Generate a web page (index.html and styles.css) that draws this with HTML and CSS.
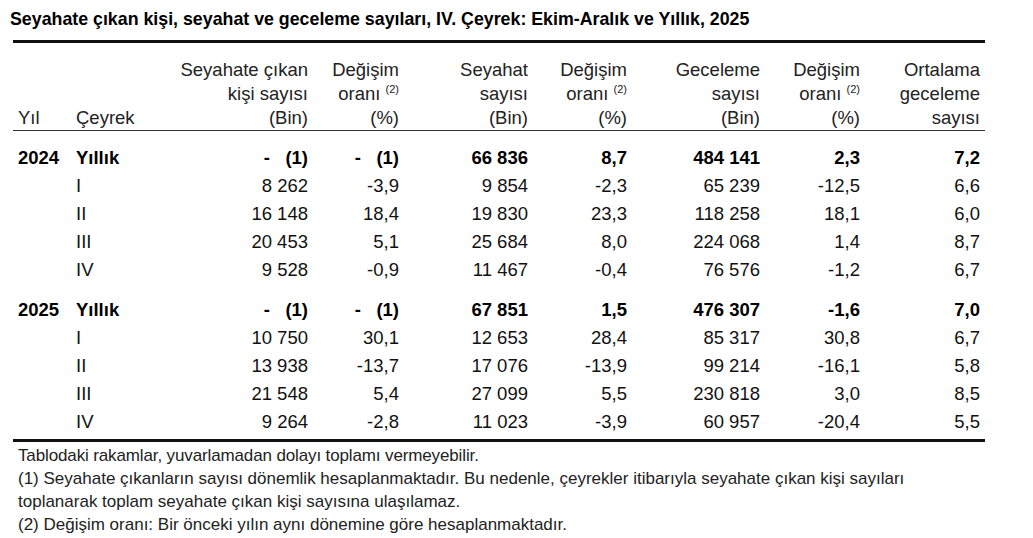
FILE: index.html
```html
<!DOCTYPE html>
<html lang="tr">
<head>
<meta charset="utf-8">
<title>Seyahate çıkan kişi</title>
<link rel="stylesheet" href="styles.css">
</head>
<body>
<div class="page">
  <h1 class="title">Seyahate çıkan kişi, seyahat ve geceleme sayıları, IV. Çeyrek: Ekim-Aralık ve Yıllık, 2025</h1>
  <table class="data">
    <colgroup>
      <col class="c-yil"><col class="c-ceyrek"><col class="c-n1"><col class="c-p1"><col class="c-n2"><col class="c-p2"><col class="c-n3"><col class="c-p3"><col class="c-avg">
    </colgroup>
    <thead>
      <tr>
        <th class="l">Yıl</th>
        <th class="l">Çeyrek</th>
        <th>Seyahate çıkan<br>kişi sayısı<br>(Bin)</th>
        <th>Değişim<br>oranı <sup>(2)</sup><br>(%)</th>
        <th>Seyahat<br>sayısı<br>(Bin)</th>
        <th>Değişim<br>oranı <sup>(2)</sup><br>(%)</th>
        <th>Geceleme<br>sayısı<br>(Bin)</th>
        <th>Değişim<br>oranı <sup>(2)</sup><br>(%)</th>
        <th class="last">Ortalama<br>geceleme<br>sayısı</th>
      </tr>
    </thead>
    <tbody>
      <tr class="b first">
        <td class="l">2024</td><td class="l">Yıllık</td><td>-&nbsp;&nbsp;&nbsp;(1)</td><td>-&nbsp;&nbsp;&nbsp;(1)</td><td>66 836</td><td>8,7</td><td>484 141</td><td>2,3</td><td class="last">7,2</td>
      </tr>
      <tr><td class="l"></td><td class="l">I</td><td>8 262</td><td>-3,9</td><td>9 854</td><td>-2,3</td><td>65 239</td><td>-12,5</td><td class="last">6,6</td></tr>
      <tr><td class="l"></td><td class="l">II</td><td>16 148</td><td>18,4</td><td>19 830</td><td>23,3</td><td>118 258</td><td>18,1</td><td class="last">6,0</td></tr>
      <tr><td class="l"></td><td class="l">III</td><td>20 453</td><td>5,1</td><td>25 684</td><td>8,0</td><td>224 068</td><td>1,4</td><td class="last">8,7</td></tr>
      <tr><td class="l"></td><td class="l">IV</td><td>9 528</td><td>-0,9</td><td>11 467</td><td>-0,4</td><td>76 576</td><td>-1,2</td><td class="last">6,7</td></tr>
      <tr class="b gap">
        <td class="l">2025</td><td class="l">Yıllık</td><td>-&nbsp;&nbsp;&nbsp;(1)</td><td>-&nbsp;&nbsp;&nbsp;(1)</td><td>67 851</td><td>1,5</td><td>476 307</td><td>-1,6</td><td class="last">7,0</td>
      </tr>
      <tr><td class="l"></td><td class="l">I</td><td>10 750</td><td>30,1</td><td>12 653</td><td>28,4</td><td>85 317</td><td>30,8</td><td class="last">6,7</td></tr>
      <tr><td class="l"></td><td class="l">II</td><td>13 938</td><td>-13,7</td><td>17 076</td><td>-13,9</td><td>99 214</td><td>-16,1</td><td class="last">5,8</td></tr>
      <tr><td class="l"></td><td class="l">III</td><td>21 548</td><td>5,4</td><td>27 099</td><td>5,5</td><td>230 818</td><td>3,0</td><td class="last">8,5</td></tr>
      <tr class="end"><td class="l"></td><td class="l">IV</td><td>9 264</td><td>-2,8</td><td>11 023</td><td>-3,9</td><td>60 957</td><td>-20,4</td><td class="last">5,5</td></tr>
    </tbody>
  </table>
  <div class="notes">
    <p class="tight">Tablodaki rakamlar, yuvarlamadan dolayı toplamı vermeyebilir.</p>
    <p>(1) Seyahate çıkanların sayısı dönemlik hesaplanmaktadır. Bu nedenle, çeyrekler itibarıyla seyahate çıkan kişi sayıları<br>toplanarak toplam seyahate çıkan kişi sayısına ulaşılamaz.</p>
    <p>(2) Değişim oranı: Bir önceki yılın aynı dönemine göre hesaplanmaktadır.</p>
  </div>
</div>
</body>
</html>
```

FILE: styles.css
```css
html, body {
  margin: 0;
  padding: 0;
  background: #fff;
}
body {
  font-family: "Liberation Sans", Arial, sans-serif;
  color: #111;
}
.page {
  padding: 8px 0 0 13px;
  width: 972px;
}
.title {
  margin: 0 0 0 -3px;
  font-size: 17.8px;
  font-weight: bold;
  line-height: 22px;
  color: #000;
  height: 32px;
}
.data {
  border-collapse: collapse;
  table-layout: fixed;
  width: 972px;
  font-size: 18.5px;
  border-top: 3px solid #111;
  border-bottom: 3px solid #111;
}
.c-yil { width: 63px; }
.c-ceyrek { width: 104px; }
.c-n1 { width: 128px; }
.c-p1 { width: 91px; }
.c-n2 { width: 129px; }
.c-p2 { width: 99px; }
.c-n3 { width: 133px; }
.c-p3 { width: 100px; }
.c-avg { width: 125px; }

.data th {
  font-weight: normal;
  text-align: right;
  vertical-align: bottom;
  line-height: 24px;
  padding: 15px 0 0 0;
  border-bottom: 1px solid #333;
  color: #222;
  white-space: nowrap;
}
.data th sup {
  font-size: 11px;
  line-height: 0;
  vertical-align: 7px;
}
.data td {
  text-align: right;
  line-height: 28px;
  padding: 0;
  white-space: nowrap;
}
.data .l {
  text-align: left;
}
.data th.l:first-child, .data td.l:first-child {
  padding-left: 5px;
}
.data .last {
  padding-right: 5px;
}
.data tr.b td {
  font-weight: bold;
  color: #000;
}
.data tr.first td {
  padding-top: 13px;
}
.data tr.gap td {
  padding-top: 12px;
}
.data tr.end td {
  padding-bottom: 3px;
}
.notes {
  padding: 2px 0 0 5px;
  font-size: 17px;
  color: #222;
}
.notes p {
  margin: 0;
  line-height: 23px;
}
.notes p.tight {
  letter-spacing: -0.13px;
}
```
